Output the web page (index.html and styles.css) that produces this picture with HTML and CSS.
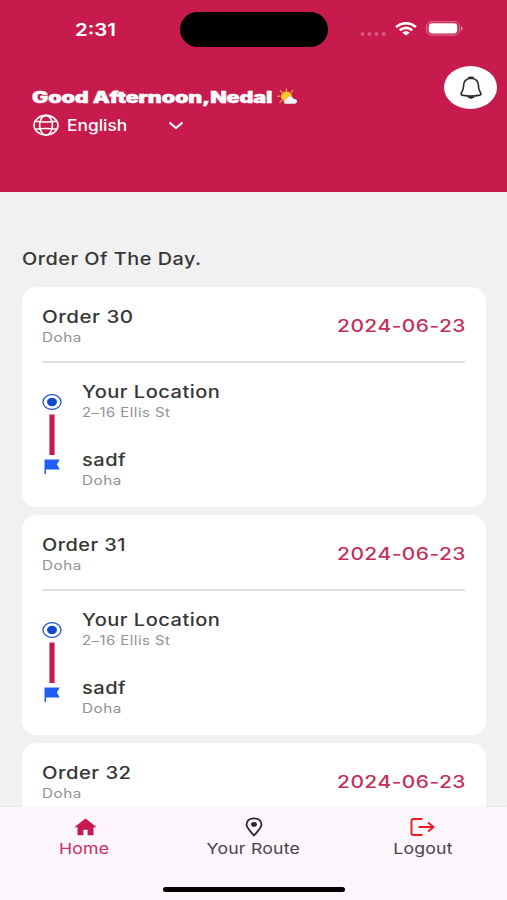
FILE: index.html
```html
<!DOCTYPE html>
<html lang="en">
<head>
<meta charset="utf-8">
<title>Orders</title>
<link rel="stylesheet" href="styles.css">
</head>
<body>
<div class="app">
  <header class="header">
    <div class="status">
      <div class="clock"><span class="t">2:31</span></div>
      <div class="island"></div>
      <div class="indicators">
        <svg class="dots" width="27" height="6" viewBox="0 0 27 6"><g fill="#fff" opacity=".28"><circle cx="2.500" cy="3" r="1.900"/><circle cx="9.500" cy="3" r="1.900"/><circle cx="16.500" cy="3" r="1.900"/><circle cx="23.700" cy="3" r="1.900"/></g></svg>
        <svg class="wifi" width="22" height="14" viewBox="0 0 22 14" fill="none" stroke="#fff" stroke-width="2.500"><path d="M1 4.900Q11-2.600 21 4.900M4.700 8.200q6.300-4.600 12.600 0"/><path d="M7.300 10.700q3.700-2.800 7.400 0L11 13.400z" fill="#fff" stroke="none"/></svg>
        <svg class="battery" width="38" height="15" viewBox="0 0 38 15"><rect x=".7" y=".7" width="32.800" height="13.400" rx="4.800" fill="none" stroke="#fff" stroke-opacity=".42"/><rect x="2.700" y="2.300" width="28.600" height="10.200" rx="3.400" fill="#fff"/><path d="M35 5v5q1.700-.9 1.700-2.500T35 5" fill="#fff" opacity=".5"/></svg>
      </div>
    </div>
    <div class="hello">
      <div class="who">
        <div class="greeting"><span class="t">Good Afternoon,Nedal</span>
          <svg class="sun" width="21" height="18" viewBox="0 0 21 18"><path d="M9.500.8v2.200M3.300 2.600l1.600 1.700M.6 8.200h2.300M3 14l1.700-1.600M15.800 2.400l-1.600 1.800M8 15.300l.4-1.700" stroke="#f3a32b" stroke-width="1.300" stroke-linecap="round"/><ellipse cx="9.500" cy="8.500" rx="5.400" ry="4.900" fill="#fcc52f"/><path d="M9.600 15.700c-3.500 0-3.500-4 0-4.100.7-4.100 6-4.200 7.200-.7 4.400-.1 4.300 4.800.6 4.800z" fill="#f1f3fa"/></svg>
        </div>
        <div class="lang">
          <svg width="28" height="23" viewBox="0 0 28 23" fill="none" stroke="#fff" stroke-width="1.600"><ellipse cx="14" cy="11.200" rx="12" ry="9.800"/><ellipse cx="14" cy="11.200" rx="6.400" ry="9.800"/><path d="M3.200 7.200q10.800 1.500 21.600 0M3.200 15.200q10.800-1.500 21.600 0"/></svg>
          <span class="lang-name"><span class="t">English</span></span>
          <svg width="16" height="9" viewBox="0 0 16 9" fill="none" stroke="#fff" stroke-width="2.100"><path d="M1.500 1.500 8 7l6.500-5.500"/></svg>
        </div>
      </div>
      <div class="bell"><svg width="26" height="26" viewBox="0 0 26 26" fill="none" stroke="#222b30" stroke-width="1.600" stroke-linejoin="round"><path d="M13 3.300c-5 .4-7.400 3.500-7.400 7.300 0 4.400-1 5.300-2.300 7.300-.7 1.200-.2 1.900 1 2.200 5.800 1.300 11.600 1.300 17.400 0 1.200-.3 1.700-1 1-2.200-1.300-2-2.300-2.900-2.300-7.300 0-3.800-2.400-6.900-7.400-7.300zM10.300 3.200c.7-1.300 4.700-1.300 5.400 0M9.300 21c1.200 2.500 6.200 2.500 7.400 0"/></svg></div>
    </div>
  </header>

  <main class="content">
    <h1 class="heading"><span class="t">Order Of The Day.</span></h1>
    <article class="card">
      <div class="top">
        <div><div class="title n30"><span class="t">Order 30</span></div><div class="sub"><span class="t">Doha</span></div></div>
        <div class="date"><span class="t">2024-06-23</span></div>
      </div>
      <div class="trip">
        <div class="track"><svg width="20" height="76" viewBox="0 0 20 76"><ellipse cx="10" cy="9" rx="9" ry="7.300" fill="none" stroke="#2458d9" stroke-width="1.300"/><ellipse cx="10" cy="9" rx="5" ry="4.200" fill="#1749d0"/><path d="M7.400 21.500h5.200V62H7.400z" fill="#c81b4d"/><path d="M2.500 66.500h15.200l-2.800 5 2.800 5H4V81H2.500z" fill="#1e5ff5"/></svg></div>
        <div class="stops">
          <div class="stop"><div class="title loc"><span class="t">Your Location</span></div><div class="sub ellis"><span class="t">2–16 Ellis St</span></div></div>
          <div class="stop"><div class="title"><span class="t">sadf</span></div><div class="sub"><span class="t">Doha</span></div></div>
        </div>
      </div>
    </article>
    <article class="card">
      <div class="top">
        <div><div class="title n31"><span class="t">Order 31</span></div><div class="sub"><span class="t">Doha</span></div></div>
        <div class="date"><span class="t">2024-06-23</span></div>
      </div>
      <div class="trip">
        <div class="track"><svg width="20" height="76" viewBox="0 0 20 76"><ellipse cx="10" cy="9" rx="9" ry="7.300" fill="none" stroke="#2458d9" stroke-width="1.300"/><ellipse cx="10" cy="9" rx="5" ry="4.200" fill="#1749d0"/><path d="M7.400 21.500h5.200V62H7.400z" fill="#c81b4d"/><path d="M2.500 66.500h15.200l-2.800 5 2.800 5H4V81H2.500z" fill="#1e5ff5"/></svg></div>
        <div class="stops">
          <div class="stop"><div class="title loc"><span class="t">Your Location</span></div><div class="sub ellis"><span class="t">2–16 Ellis St</span></div></div>
          <div class="stop"><div class="title"><span class="t">sadf</span></div><div class="sub"><span class="t">Doha</span></div></div>
        </div>
      </div>
    </article>
    <article class="card">
      <div class="top">
        <div><div class="title n32"><span class="t">Order 32</span></div><div class="sub"><span class="t">Doha</span></div></div>
        <div class="date"><span class="t">2024-06-23</span></div>
      </div>
    </article>
  </main>

  <nav class="nav">
    <div class="tabs">
      <div class="tab home"><svg width="24" height="20" viewBox="0 0 24 20"><path d="M12.500 1.500 1.300 10.300H4.500V18.300h5.900v-5.600h4.200v5.600h5.900v-8h3.200z" fill="#c9194e"/></svg><span class="t">Home</span></div>
      <div class="tab route"><svg width="18" height="20" viewBox="0 0 18 20"><path d="M9 18.500C5 14 1.500 10.700 1.500 7.500 1.500-.8 16.500-.8 16.500 7.500 16.500 10.700 13 14 9 18.500z" fill="none" stroke="#2a282c" stroke-width="1.800"/><ellipse cx="9" cy="7.400" rx="2.900" ry="2.300" fill="#2a282c"/></svg><span class="t">Your Route</span></div>
      <div class="tab logout"><svg width="26" height="20" viewBox="0 0 26 20" fill="none" stroke="#ed1c1c" stroke-width="1.900"><path d="M12.500 2H3.300Q1.500 2 1.500 3.500v13q0 1.500 1.800 1.500h9.200M8.500 10h15M18 5.500 23.500 10 18 14.500"/></svg><span class="t">Logout</span></div>
    </div>
    <div class="bar"></div>
  </nav>
</div>
</body>
</html>
```

FILE: styles.css
```css
* { box-sizing: border-box; }
body { margin: 0; font-family: Inter, "Liberation Sans", sans-serif; color: #363636; }
svg { display: block; flex: none; }
.app { width: 507px; height: 900px; display: flex; flex-direction: column; overflow: hidden; background: #f1f1f1; }
.t { display: inline-block; white-space: nowrap; transform: scaleX(var(--sx, 1.15)); transform-origin: left center; }

.header { height: 192px; flex: none; background: #c81b4d; color: #fff; border-bottom: 0; }
.status { height: 60px; padding: 12px 43px 0 75px; display: flex; justify-content: space-between; }
.clock { width: 105px; font-size: 17.5px; line-height: 35px; font-weight: 600; --sx: 1.17; }
.island { width: 148px; height: 35px; border-radius: 18px; background: #000; }
.indicators { width: 136px; padding: 9px 0 0 32px; display: flex; }
.dots { margin-top: 10px; }
.wifi { margin: 1px 0 0 8px; }
.battery { margin-left: 9px; }
.hello { display: flex; justify-content: space-between; padding: 6px 10px 0 32px; }
.who { padding-top: 22px; }
.greeting { width: 266px; height: 20px; line-height: 19px; font-size: 15.3px; font-weight: 900; letter-spacing: -.1px; -webkit-text-stroke: .4px #fff; display: flex; justify-content: space-between; --sx: 1.41; }
.lang { display: flex; align-items: center; height: 34px; font-size: 15.5px; font-weight: 500; --sx: 1.12; }
.lang-name { width: 101px; margin-left: 7px; }
.bell { width: 53px; height: 43px; border-radius: 50%; background: #fff; display: flex; align-items: center; justify-content: center; }

.content { flex: 1; min-height: 0; overflow: hidden; padding: 55px 21px 0 22px; display: flex; flex-direction: column; }
.heading { margin: 0 0 16px; height: 24px; flex: none; font-size: 17px; line-height: 24px; font-weight: 450; letter-spacing: .4px; --sx: 1.17; }
.card { height: 220px; margin-bottom: 8px; flex: none; padding: 0 21px 0 20px; border-radius: 15px 15px 14px 14px; background: #fff; }
.top { height: 76px; display: flex; justify-content: space-between; padding-top: 19px; border-bottom: 2px solid #dedede; }
.title { height: 23px; line-height: 23px; font-size: 17px; font-weight: 450; letter-spacing: .4px; --sx: 1.18; }
.n30 { --sx: 1.21; }
.n31 { --sx: 1.17; }
.n32 { --sx: 1.19; }
.sub { height: 18px; line-height: 18px; font-size: 12.5px; letter-spacing: .4px; color: #929292; --sx: 1.22; }
.ellis { --sx: 1.19; }
.date { width: 128px; height: 41px; line-height: 41px; font-size: 17px; font-weight: 450; letter-spacing: .4px; color: #c2315b; --sx: 1.23; }
.trip { display: flex; padding-top: 18px; }
.track { width: 40px; padding-top: 12px; }
.track svg { overflow: visible; }
.stop { height: 68px; }

.nav { height: 93px; flex: none; background: #fdf6fd; box-shadow: 0 -1px 2px #0000000d; position: relative; }
.tabs { display: grid; grid-template-columns: repeat(3, 1fr); height: 80px; padding-top: 10px; }
.tab { display: flex; flex-direction: column; align-items: center; font-size: 14.8px; line-height: 25px; letter-spacing: .2px; color: #464348; --sx: 1.19; }
.tab .t { transform-origin: center; }
.home { color: #cd2d5d; }
.bar { width: 182px; height: 5px; margin: 0 auto; border-radius: 3px; background: #000; }
```
